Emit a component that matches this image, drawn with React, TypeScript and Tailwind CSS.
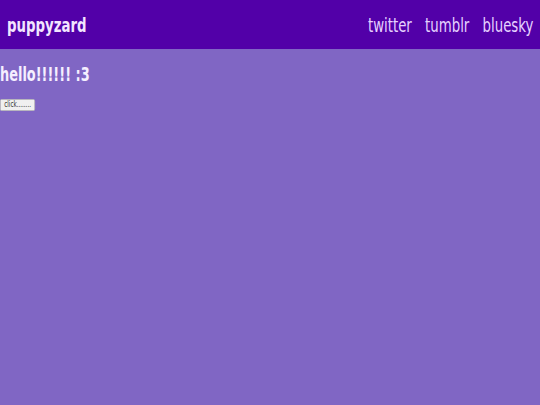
import React from "react";

export default function App() {
  return (
    <div
      className="min-h-screen bg-[#8066c4]"
      style={{ fontFamily: '"DejaVu Sans", Verdana, sans-serif' }}
    >
      <header className="h-[49px] bg-[#5200a8] flex items-center justify-between px-[7px]">
        <span className="inline-block origin-left scale-x-[0.7] font-bold text-[19px] leading-[22px] text-[#f3e6ff]">
          puppyzard
        </span>
        <nav className="flex gap-[19px] origin-right scale-x-[0.7] text-[19px] leading-[22px] text-[#e6d2ff]">
          <a href="#">twitter</a>
          <a href="#">tumblr</a>
          <a href="#">bluesky</a>
        </nav>
      </header>
      <main className="flex flex-col items-start">
        <h1 className="mt-[14px] inline-block origin-left scale-x-[0.68] font-bold text-[19px] leading-[22px] text-[#f5efff]">
          hello!!!!!! :3
        </h1>
        <button className="mt-[14px] origin-left scale-x-[0.7] border border-[#b8b8b8] rounded-[2px] bg-[#f0f0f0] px-[5px] py-[1px] text-[8px] leading-[8px] text-[#333333]">
          click........
        </button>
      </main>
    </div>
  );
}
